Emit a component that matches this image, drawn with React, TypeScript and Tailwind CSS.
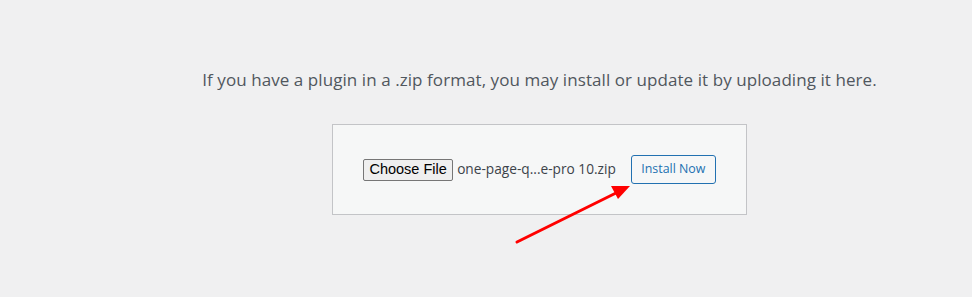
export default function App() {
  return (
    <div className="relative h-[297px] w-[972px] overflow-hidden bg-[#f0f0f1] pl-[107px] font-['Open_Sans',sans-serif] text-[#3c434a]">
      <div className="flex flex-col items-center pt-[68px]">
        <p className="whitespace-nowrap text-[17px] leading-[24px] tracking-[0.07px] text-[#50575e]">
          If you have a plugin in a .zip format, you may install or update it by uploading it here.
        </p>
        <form className="mt-[32px] flex h-[91px] w-[415px] items-center justify-center border border-[#c3c4c7] bg-[#f6f7f7]">
          <div className="flex items-center">
            <button
              type="button"
              className="h-[22px] w-[90px] rounded-[2px] border border-[#767676] bg-[#efefef] p-0 font-['Liberation_Sans',sans-serif] text-[14.5px] leading-none text-black"
            >
              Choose File
            </button>
            <span className="ml-[4px] whitespace-nowrap text-[13.7px] text-[#3c434a]">one-page-q...e-pro 10.zip</span>
          </div>
          <button
            type="button"
            className="ml-[15px] h-[29px] w-[85px] rounded-[3px] border border-[#2271b1] bg-[#f6f7f7] p-0 text-[12.4px] text-[#2271b1]"
          >
            Install Now
          </button>
        </form>
      </div>

      {/* red arrow overlay */}
      <svg className="absolute left-0 top-0" width="972" height="297" viewBox="0 0 972 297">
        <line x1="517" y1="242" x2="616" y2="193" stroke="#f00" strokeWidth="3" strokeLinecap="round" />
        <polygon points="630,186 611,186 618,199" fill="#f00" />
      </svg>
    </div>
  )
}
